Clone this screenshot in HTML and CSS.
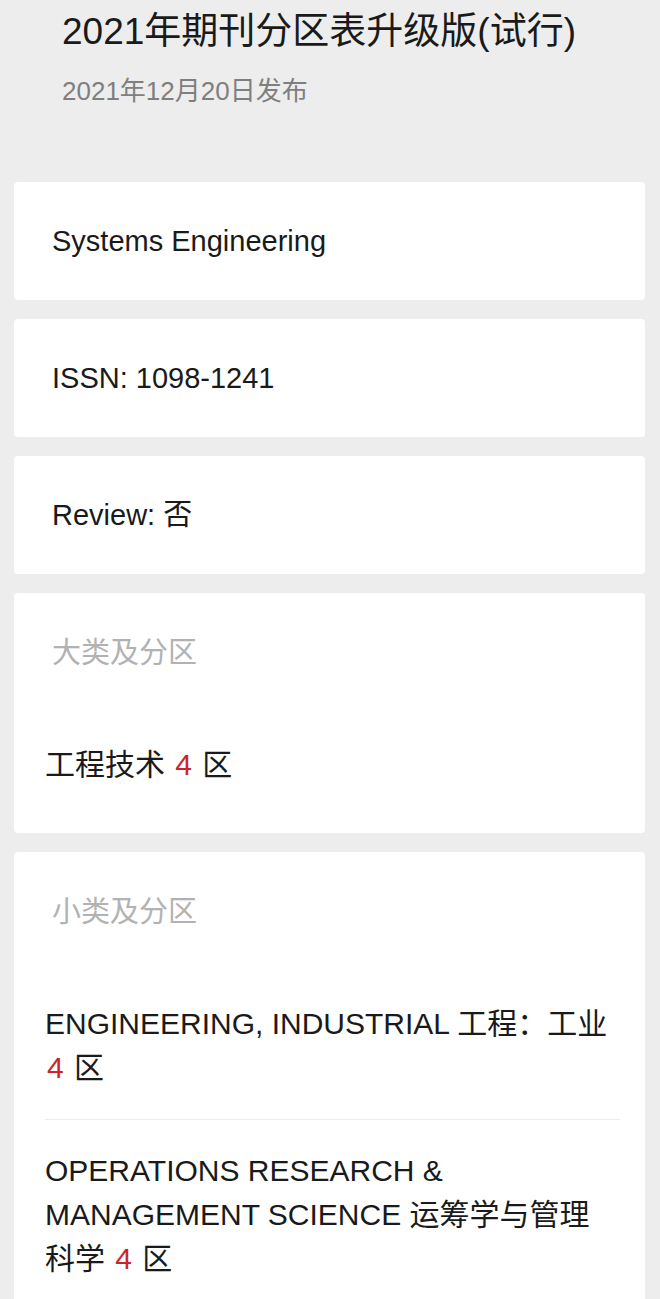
FILE: index.html
```html
<!DOCTYPE html>
<html lang="zh-CN">
<head>
    <meta charset="UTF-8">
    <meta name="viewport" content="width=device-width, initial-scale=1.0">
    <title>2021年期刊分区表升级版(试行)</title>
    <link rel="stylesheet" href="styles.css">
</head>
<body>
    <div class="page">
        <div class="header">
            <h1>2021年期刊分区表升级版(试行)</h1>
            <p class="date">2021年12月20日发布</p>
        </div>

        <div class="card">
            <p class="field">Systems Engineering</p>
        </div>
        <div class="card">
            <p class="field">ISSN: 1098-1241</p>
        </div>
        <div class="card">
            <p class="field">Review: 否</p>
        </div>

        <div class="card section">
            <h2 class="section-title">大类及分区</h2>
            <ul class="zone-list">
                <li>工程技术 <span class="zone">4</span> 区</li>
            </ul>
        </div>

        <div class="card section">
            <h2 class="section-title">小类及分区</h2>
            <ul class="zone-list">
                <li>ENGINEERING, INDUSTRIAL 工程：工业 <span class="zone">4</span> 区</li>
                <li>OPERATIONS RESEARCH &amp; MANAGEMENT SCIENCE 运筹学与管理科学 <span class="zone">4</span> 区</li>
            </ul>
        </div>
    </div>
</body>
</html>
```

FILE: styles.css
```css
body {
    font-family: 'Liberation Sans', 'Noto Sans CJK SC', sans-serif;
    background-color: #ededed;
    color: #1a1a1a;
    margin: 0;
    padding: 0;
}
.page {
    padding: 7px 15px 0 14px;
}
.header {
    padding-left: 48px;
    margin-bottom: 73px;
}
h1 {
    font-size: 37px;
    font-weight: normal;
    line-height: 50px;
    margin: 0;
}
.date {
    font-size: 26px;
    line-height: 36px;
    color: #7f7f7f;
    margin: 16px 0 0;
}
.card {
    background: white;
    border-radius: 4px;
    margin-bottom: 19px;
}
.field {
    font-size: 29px;
    line-height: 40px;
    margin: 0;
    padding: 39px 38px;
}
.section {
    padding: 38px 25px 17px 31px;
}
.section-title {
    font-size: 29px;
    font-weight: normal;
    line-height: 44px;
    color: #b2b2b2;
    margin: 0 0 39px;
    padding-left: 7px;
}
.zone-list {
    list-style: none;
    margin: 0;
    padding: 0;
}
.zone-list li {
    font-size: 30px;
    line-height: 44px;
    padding: 29px 6px 29px 0;
    border-bottom: 1px solid #ececec;
}
.zone-list li:last-child {
    border-bottom: none;
}
.zone {
    color: #c8262c;
    margin: 0 2px;
}
```
